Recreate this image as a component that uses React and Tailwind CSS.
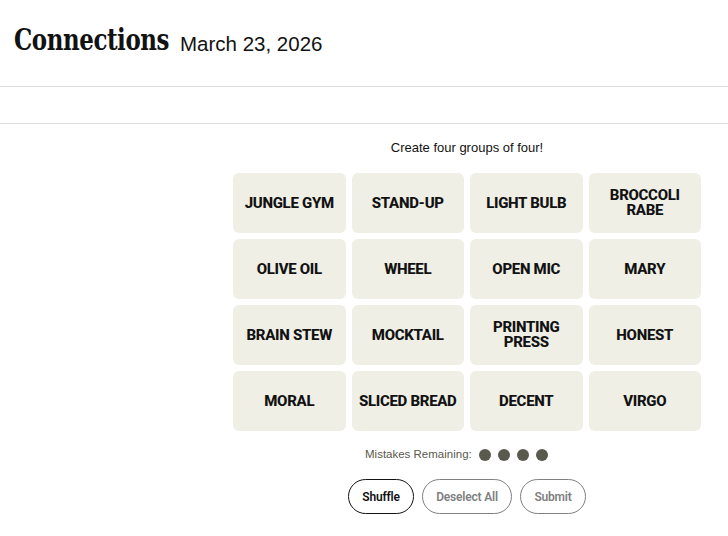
import React from 'react';

const words = [
  'JUNGLE GYM', 'STAND-UP', 'LIGHT BULB', 'BROCCOLI RABE',
  'OLIVE OIL', 'WHEEL', 'OPEN MIC', 'MARY',
  'BRAIN STEW', 'MOCKTAIL', 'PRINTING PRESS', 'HONEST',
  'MORAL', 'SLICED BREAD', 'DECENT', 'VIRGO',
];

const Tile = ({ word }) => (
  <button className="h-[60px] rounded-md bg-[#efefe6] flex items-center justify-center px-[4px] text-center text-[15px] leading-[15px] tracking-[-0.3px] font-extrabold text-[#121212] [font-family:Roboto,'Liberation_Sans',sans-serif]">
    {word}
  </button>
);

export default function App() {
  return (
    <div className="min-h-[536px] bg-white text-[#121212]">
      {/* title bar */}
      <div className="h-[87px] border-b border-[#dcdcdc] flex items-end pb-[31px] pl-[14px] gap-[13px]">
        <h1 className="w-[153px] whitespace-nowrap text-[30px] leading-none font-bold [font-family:'DejaVu_Serif_Condensed','DejaVu_Serif',serif]">
          <span className="inline-block origin-left [transform:scaleX(0.85)] tracking-[-0.5px]">Connections</span>
        </h1>
        <span className="text-[20.5px] leading-none mb-[1px] [font-family:'Liberation_Sans',Arial,sans-serif]">
          March 23, 2026
        </span>
      </div>
      {/* toolbar strip */}
      <div className="h-[37px] border-b border-[#dcdcdc]" />

      <div className="ml-[233px] w-[468px] flex flex-col items-center">
        <p className="mt-[16px] text-[13px] leading-[16px] [font-family:'Liberation_Sans',Arial,sans-serif]">
          Create four groups of four!
        </p>
        <div className="mt-[17px] w-full grid grid-cols-4 gap-[6px]">
          {words.map((w) => (
            <Tile key={w} word={w} />
          ))}
        </div>
        <div className="mt-[15px] self-start ml-[132px] flex items-center gap-[7px] text-[11.5px] text-[#5a594e] [font-family:'Liberation_Sans',Arial,sans-serif]">
          <span>Mistakes Remaining:</span>
          <div className="flex gap-[7px]">
            {[0, 1, 2, 3].map((i) => (
              <span key={i} className="w-[12px] h-[12px] rounded-full bg-[#5a594e]" />
            ))}
          </div>
        </div>
        <div className="mt-[16px] flex text-[12px] font-semibold tracking-[-0.2px] [font-family:Roboto,'Liberation_Sans',sans-serif]">
          <button className="w-[66px] h-[35px] rounded-full border border-[#121212] text-[#121212]">Shuffle</button>
          <button className="ml-[8px] w-[90px] h-[35px] rounded-full border border-[#7f7f7f] text-[#7f7f7f]">Deselect All</button>
          <button className="ml-[8px] w-[66px] h-[35px] rounded-full border border-[#7f7f7f] text-[#7f7f7f]">Submit</button>
        </div>
      </div>
    </div>
  );
}
